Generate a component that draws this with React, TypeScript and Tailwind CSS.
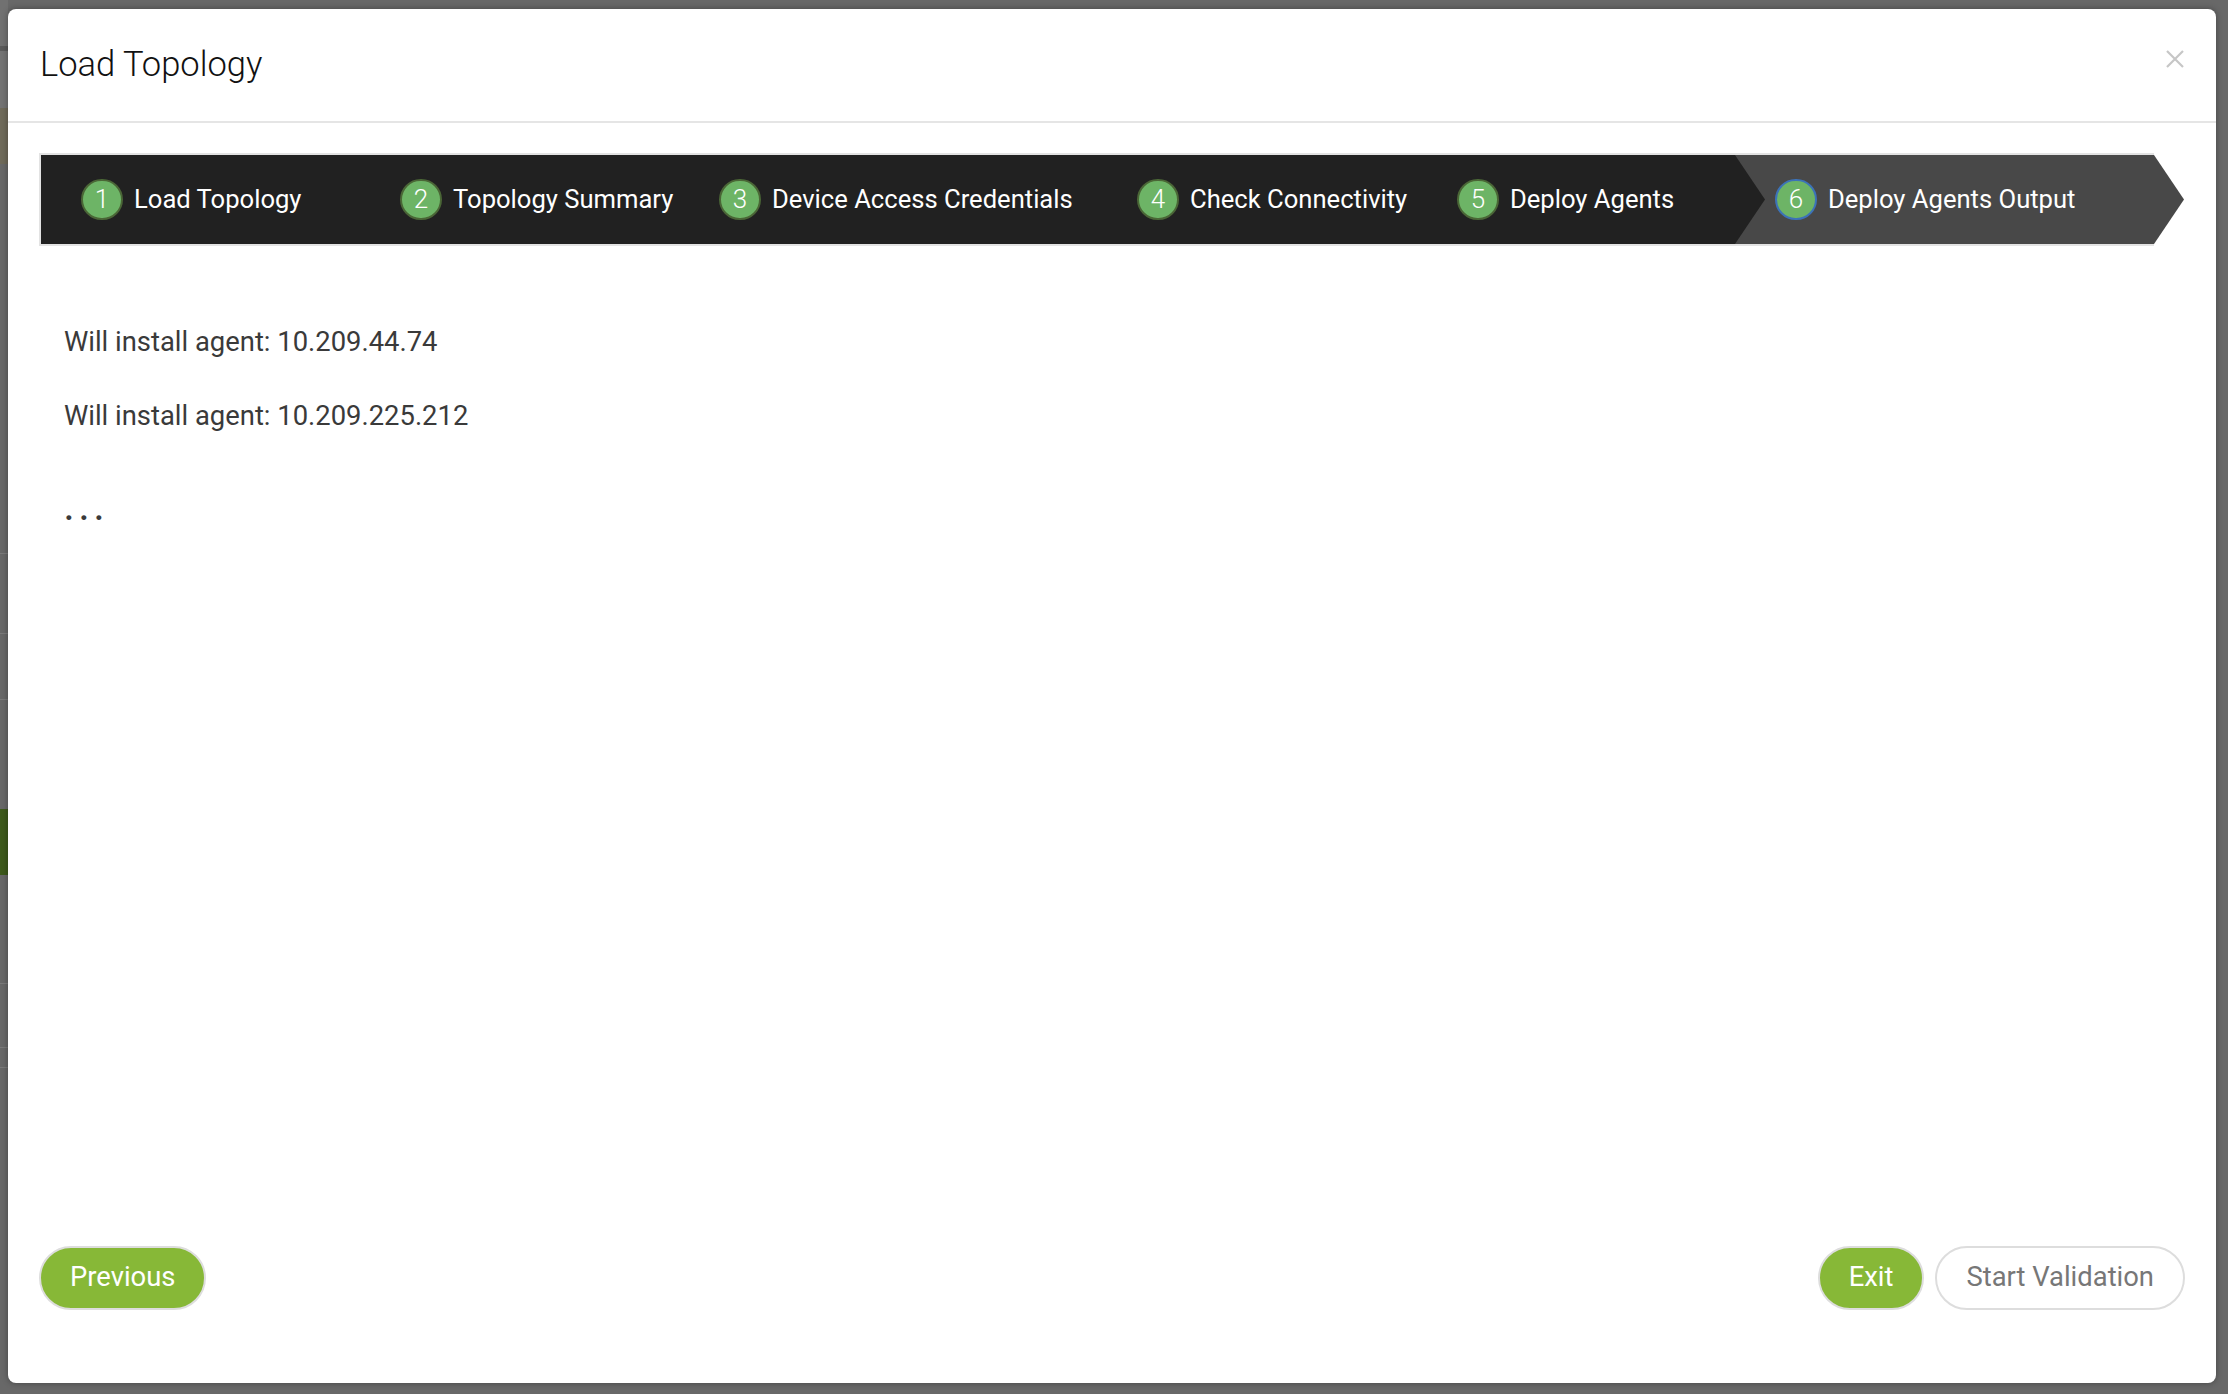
import React from 'react';

const font = { fontFamily: 'Roboto, "Liberation Sans", sans-serif' };

type Step = { n: number; label: string; width: string };

const steps: Step[] = [
  { n: 1, label: 'Load Topology', width: 'w-[319px]' },
  { n: 2, label: 'Topology Summary', width: 'w-[319px]' },
  { n: 3, label: 'Device Access Credentials', width: 'w-[418px]' },
  { n: 4, label: 'Check Connectivity', width: 'w-[320px]' },
  { n: 5, label: 'Deploy Agents', width: 'w-[318px]' },
];

function Badge({ n, active }: { n: number; active?: boolean }) {
  return (
    <span
      className={`flex h-[41px] w-[42px] shrink-0 items-center justify-center rounded-full border-2 bg-[#6db466] text-[26px] font-light text-white ${
        active ? 'border-[#3c72b8]' : 'border-[#4a6636]'
      }`}
    >
      {n}
    </span>
  );
}

function Stepper() {
  return (
    <div className="flex">
      <div className="flex h-[93px] w-[2115px] border-y-2 border-l-2 border-[#e3e3e3] bg-[#212121]">
        {steps.map((s) => (
          <div key={s.n} className={`flex h-full shrink-0 items-center gap-[11px] pl-[40px] ${s.width}`}>
            <Badge n={s.n} />
            <span className="text-[25.6px] text-white">{s.label}</span>
          </div>
        ))}
        <div className="relative flex h-full flex-1 items-center gap-[11px] bg-[#484848] pl-[40px]">
          <svg className="absolute left-0 top-0" width="31" height="89" viewBox="0 0 31 89">
            <polygon points="0,0 30,44.5 0,89" fill="#212121" />
          </svg>
          <Badge n={6} active />
          <span className="text-[25.6px] text-white">Deploy Agents Output</span>
        </div>
      </div>
      <svg width="31" height="93" viewBox="0 0 31 93" className="shrink-0">
        <polygon points="0,2 30,46.5 0,91" fill="#484848" />
      </svg>
    </div>
  );
}

function Backdrop() {
  return (
    <div className="flex w-[8px] shrink-0 flex-col">
      <div className="h-[46px] bg-[#717171]" />
      <div className="h-[5px] bg-[#5b5b5b]" />
      <div className="h-[57px] bg-[#737373]" />
      <div className="h-[56px] bg-[#6f6a5a]" />
      <div className="h-[389px] bg-[#686868]" />
      <div className="h-px bg-[#7a7a7a]" />
      <div className="h-[79px] bg-[#686868]" />
      <div className="h-px bg-[#7a7a7a]" />
      <div className="h-[65px] bg-[#686868]" />
      <div className="h-px bg-[#7a7a7a]" />
      <div className="h-[109px] bg-[#686868]" />
      <div className="h-[66px] bg-[#3e5a1c]" />
      <div className="h-[108px] bg-[#686868]" />
      <div className="h-px bg-[#7a7a7a]" />
      <div className="h-[63px] bg-[#686868]" />
      <div className="h-px bg-[#7a7a7a]" />
      <div className="h-[19px] bg-[#686868]" />
      <div className="h-px bg-[#7a7a7a]" />
      <div className="flex-1 bg-[#686868]" />
    </div>
  );
}

export default function App() {
  return (
    <div className="flex h-[1394px] w-[2228px] bg-[#686868]" style={font}>
      <Backdrop />
      <div className="flex flex-1 flex-col pb-[11px] pr-[14px] pt-[9px]">
        <div className="flex flex-1 flex-col rounded-[8px] bg-white shadow-[0_0_6px_rgba(0,0,0,0.35)]">
          <div className="flex h-[114px] shrink-0 items-center justify-between border-b-2 border-[#e5e5e5] pl-[32px] pr-[32px]">
            <h1 className="text-[34.5px] font-light text-[#111]">Load Topology</h1>
            <button className="mb-[12px] text-[#c6c6c6]" title="Close">
              <svg width="18" height="18" viewBox="0 0 18 18">
                <path d="M1 1 L17 17 M17 1 L1 17" stroke="currentColor" strokeWidth="2.2" />
              </svg>
            </button>
          </div>

          <div className="flex flex-1 flex-col px-[31px] pt-[30px]">
            <Stepper />
            <div className="flex-1 pl-[25px] pt-[80px] text-[27.4px] text-[#3a3a3a]">
              <p className="leading-[32px]">Will install agent: 10.209.44.74</p>
              <p className="mt-[42px] leading-[32px]">Will install agent: 10.209.225.212</p>
              <p className="mt-[56px] text-[36px] font-medium leading-[40px] tracking-[5px]">...</p>
            </div>
            <div className="flex items-center justify-between pb-[73px]">
              <button className="h-[64px] rounded-full border-2 border-[#dddddd] bg-[#87b837] px-[29px] text-[27.4px] text-white">
                Previous
              </button>
              <div className="flex gap-[11px]">
                <button className="h-[64px] rounded-full border-2 border-[#dddddd] bg-[#87b837] px-[29px] text-[27.4px] text-white">
                  Exit
                </button>
                <button className="h-[64px] rounded-full border-2 border-[#dddddd] bg-white px-[29px] text-[27.4px] text-[#777]">
                  Start Validation
                </button>
              </div>
            </div>
          </div>
        </div>
      </div>
    </div>
  );
}
